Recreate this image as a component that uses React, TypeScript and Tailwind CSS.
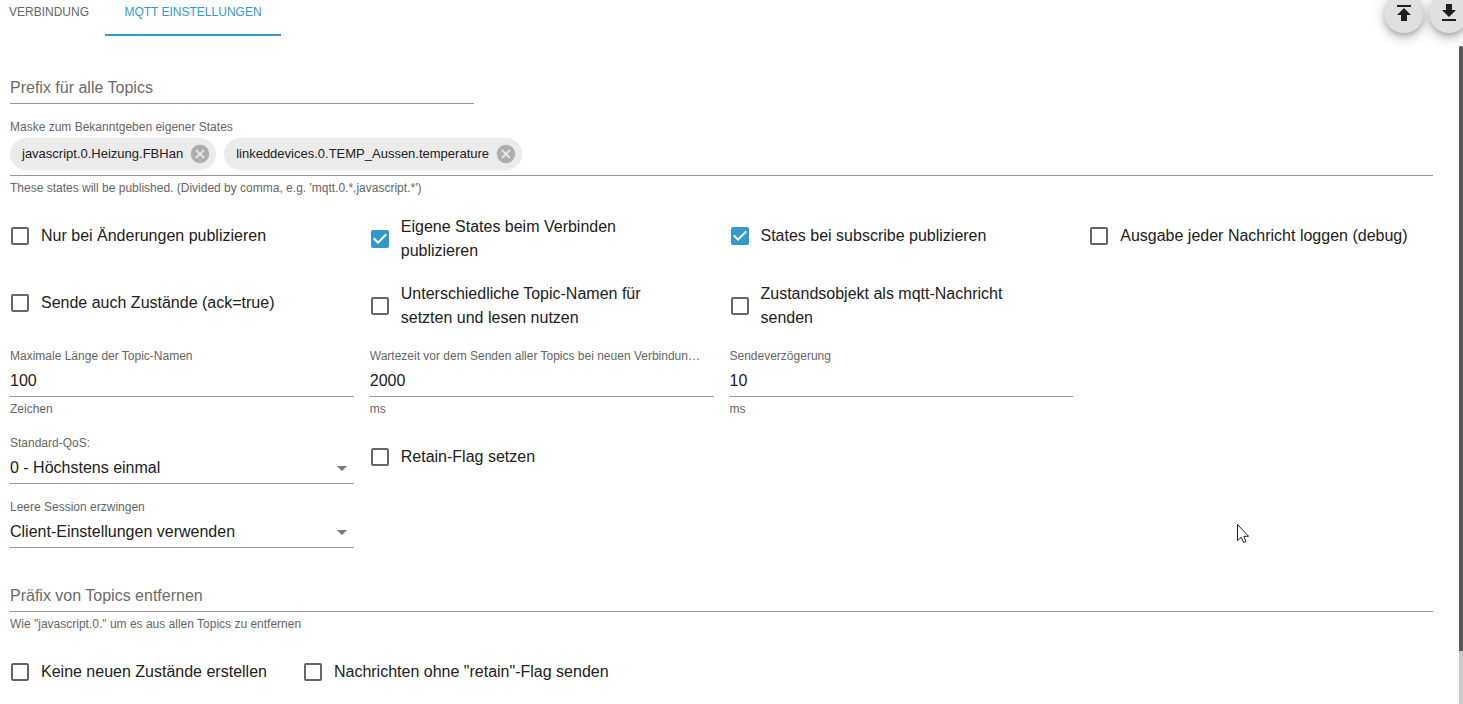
import React, { useId, useState } from "react";
import { clsx } from "clsx";

interface IconProps {
  path: string;
  className?: string;
}

const ICONS = {
  publish: "M5 4v2h14V4H5zm0 10h4v6h6v-6h4l-7-7-7 7z",
  download: "M19 9h-4V3H9v6H5l7 7 7-7zM5 18v2h14v-2H5z",
  cancel:
    "M12 2C6.47 2 2 6.47 2 12s4.47 10 10 10 10-4.47 10-10S17.53 2 12 2zm5 13.59L15.59 17 12 13.41 8.41 17 7 15.59 10.59 12 7 8.41 8.41 7 12 10.59 15.59 7 17 8.41 13.41 12 17 15.59z",
  arrowDropDown: "M7 10l5 5 5-5z",
  check: "M10 17l-5-5 1.41-1.41L10 14.17l7.59-7.59L19 8l-9 9z",
};

function Icon({ path, className }: IconProps) {
  return (
    <svg viewBox="0 0 24 24" fill="currentColor" aria-hidden="true" className={className}>
      <path d={path} />
    </svg>
  );
}

function FabButton({ label, path }: { label: string; path: string }) {
  return (
    <button
      type="button"
      aria-label={label}
      className="flex size-10 items-center justify-center rounded-full bg-[#e0e0e0] text-[#1f1f1f] shadow-[0_3px_5px_-1px_rgba(0,0,0,0.2),0_6px_10px_rgba(0,0,0,0.14),0_1px_18px_rgba(0,0,0,0.12)]"
    >
      <Icon path={path} className="size-6" />
    </button>
  );
}

interface CheckProps {
  label: string;
  checked?: boolean;
  className?: string;
}

function Check({ label, checked = false, className }: CheckProps) {
  return (
    <label className={clsx("flex min-h-[42px] items-center gap-3 pl-px", className)}>
      <span className="relative size-[18px] shrink-0">
        <input
          type="checkbox"
          defaultChecked={checked}
          className="peer block size-[18px] appearance-none rounded-xs border-2 border-[#666666] checked:border-[#3399cc] checked:bg-[#3399cc]"
        />
        <Icon
          path={ICONS.check}
          className="pointer-events-none absolute -inset-[3px] hidden size-6 text-white peer-checked:block"
        />
      </span>
      <span>{label}</span>
    </label>
  );
}

const labelClass = "block truncate text-xs leading-[18px] text-[#666666]";
const helperClass = "mt-1 text-xs leading-4 text-[#666666]";
const controlClass =
  "block h-8 w-full appearance-none rounded-none border-b border-[#949494] bg-transparent outline-none";

interface TextFieldProps {
  label: string;
  value?: string;
  helper?: string;
  className?: string;
}

function TextField({ label, value, helper, className }: TextFieldProps) {
  const id = useId();

  return (
    <div className={className}>
      <label htmlFor={id} className={clsx(labelClass, "pr-2")}>
        {label}
      </label>
      <input id={id} type="text" defaultValue={value} className={controlClass} />
      {helper && <p className={helperClass}>{helper}</p>}
    </div>
  );
}

// Empty field, the label lies on the input line until something is typed
function EmptyTextField({ label, helper, className }: TextFieldProps) {
  const id = useId();

  return (
    <div className={className}>
      <div className="relative">
        <input id={id} type="text" placeholder=" " className={clsx("peer", controlClass)} />
        <label
          htmlFor={id}
          className="pointer-events-none absolute top-1 left-0 hidden text-[#6b6b6b] peer-placeholder-shown:block"
        >
          {label}
        </label>
      </div>
      {helper && <p className={helperClass}>{helper}</p>}
    </div>
  );
}

function SelectField({ label, options }: { label: string; options: string[] }) {
  const id = useId();

  return (
    <div className="col-span-3">
      <label htmlFor={id} className={labelClass}>
        {label}
      </label>
      <div className="relative">
        <select id={id} className={controlClass}>
          {options.map((option) => (
            <option key={option}>{option}</option>
          ))}
        </select>
        <Icon
          path={ICONS.arrowDropDown}
          className="pointer-events-none absolute top-1 right-0 size-6 text-[#757575]"
        />
      </div>
    </div>
  );
}

function ChipField({ label, helper, items }: { label: string; helper: string; items: string[] }) {
  const id = useId();
  const [chips, setChips] = useState(items);

  return (
    <div>
      <label htmlFor={id} className={labelClass}>
        {label}
      </label>
      <div className="mt-0.5 flex flex-wrap gap-2 border-b border-[#949494] pb-[5px]">
        {chips.map((chip) => (
          <span
            key={chip}
            className="flex h-8 items-center gap-[6px] rounded-full bg-[#ebebeb] pr-[5px] pl-3 text-[13px]"
          >
            {chip}
            <button
              type="button"
              aria-label={`${chip} entfernen`}
              onClick={() => setChips(chips.filter((c) => c !== chip))}
              className="text-[#aeaeae]"
            >
              <Icon path={ICONS.cancel} className="size-[22px]" />
            </button>
          </span>
        ))}
        <input id={id} type="text" className="min-w-8 flex-1 bg-transparent outline-none" />
      </div>
      <p className={helperClass}>{helper}</p>
    </div>
  );
}

const gridClass = "grid grid-cols-12 items-start gap-x-4";

export default function App() {
  return (
    <div className="relative flex min-h-screen flex-col overflow-hidden bg-white font-['Liberation_Sans',Arial,sans-serif] text-base leading-6 text-[#212121]">
      <header className="mb-[10px] flex h-9 items-start justify-between">
        <nav role="tablist" className="flex h-full text-xs text-[#666666]">
          <button
            type="button"
            role="tab"
            aria-selected="false"
            className="w-[105px] pr-4 pb-3 text-right"
          >
            VERBINDUNG
          </button>
          <button
            type="button"
            role="tab"
            aria-selected="true"
            className="w-44 border-b-2 border-[#3399cc] pb-[10px] text-[#3399cc]"
          >
            MQTT EINSTELLUNGEN
          </button>
        </nav>
        <div className="-mt-[7px] -mr-[6px] flex gap-[5px]">
          <FabButton label="Hochladen" path={ICONS.publish} />
          <FabButton label="Herunterladen" path={ICONS.download} />
        </div>
      </header>

      <div className="flex flex-1">
        <main className="flex-1 pt-[26px] pr-[26px] pb-[11px] pl-[10px]">
          <div className={gridClass}>
            <EmptyTextField label="Prefix für alle Topics" className="col-span-4" />
          </div>

          <div className="mt-[14px]">
            <ChipField
              label="Maske zum Bekanntgeben eigener States"
              helper="These states will be published. (Divided by comma, e.g. 'mqtt.0.*,javascript.*')"
              items={["javascript.0.Heizung.FBHan", "linkeddevices.0.TEMP_Aussen.temperature"]}
            />
          </div>

          <div className={clsx(gridClass, "mt-[19px] gap-y-[19px]")}>
            <Check label="Nur bei Änderungen publizieren" className="col-span-3 pr-6" />
            <Check label="Eigene States beim Verbinden publizieren" checked className="col-span-3 pr-6" />
            <Check label="States bei subscribe publizieren" checked className="col-span-3 pr-6" />
            <Check label="Ausgabe jeder Nachricht loggen (debug)" className="col-span-3" />
            <Check label="Sende auch Zustände (ack=true)" className="col-span-3 pr-6" />
            <Check
              label="Unterschiedliche Topic-Namen für setzten und lesen nutzen"
              className="col-span-3 pr-6"
            />
            <Check label="Zustandsobjekt als mqtt-Nachricht senden" className="col-span-3 pr-6" />
          </div>

          <div className={clsx(gridClass, "mt-[17px]")}>
            <TextField
              label="Maximale Länge der Topic-Namen"
              value="100"
              helper="Zeichen"
              className="col-span-3"
            />
            <TextField
              label="Wartezeit vor dem Senden aller Topics bei neuen Verbindungen"
              value="2000"
              helper="ms"
              className="col-span-3"
            />
            <TextField label="Sendeverzögerung" value="10" helper="ms" className="col-span-3" />
          </div>

          <div className={clsx(gridClass, "mt-[17px]")}>
            <SelectField
              label="Standard-QoS:"
              options={["0 - Höchstens einmal", "1 - Mindestens einmal", "2 - Genau einmal"]}
            />
            <Check label="Retain-Flag setzen" className="col-span-3 mt-0.5" />
          </div>

          <div className={clsx(gridClass, "mt-[14px]")}>
            <SelectField
              label="Leere Session erzwingen"
              options={["Client-Einstellungen verwenden", "Ja", "Nein"]}
            />
          </div>

          <EmptyTextField
            label="Präfix von Topics entfernen"
            helper={'Wie "javascript.0." um es aus allen Topics zu entfernen'}
            className="mt-8"
          />

          <div className="mt-[19px] flex flex-wrap gap-x-9">
            <Check label="Keine neuen Zustände erstellen" />
            <Check label={'Nachrichten ohne "retain"-Flag senden'} />
          </div>
        </main>

        <div className="w-1 shrink-0 bg-[#c9c9c9]">
          <div className="h-[92%] rounded-t-xs bg-[#585858]" />
        </div>
      </div>

      {/* mouse pointer */}
      <svg
        viewBox="0 0 12 19"
        aria-hidden="true"
        className="pointer-events-none absolute top-[524px] left-[1237px] h-[19px] w-3"
      >
        <path
          d="M.5.5v16.2l3.7-3.5 2.4 5.3 2.4-1-2.3-5.2h4.9z"
          fill="#fff"
          stroke="#1c1c2b"
          strokeWidth="1"
        />
      </svg>
    </div>
  );
}
